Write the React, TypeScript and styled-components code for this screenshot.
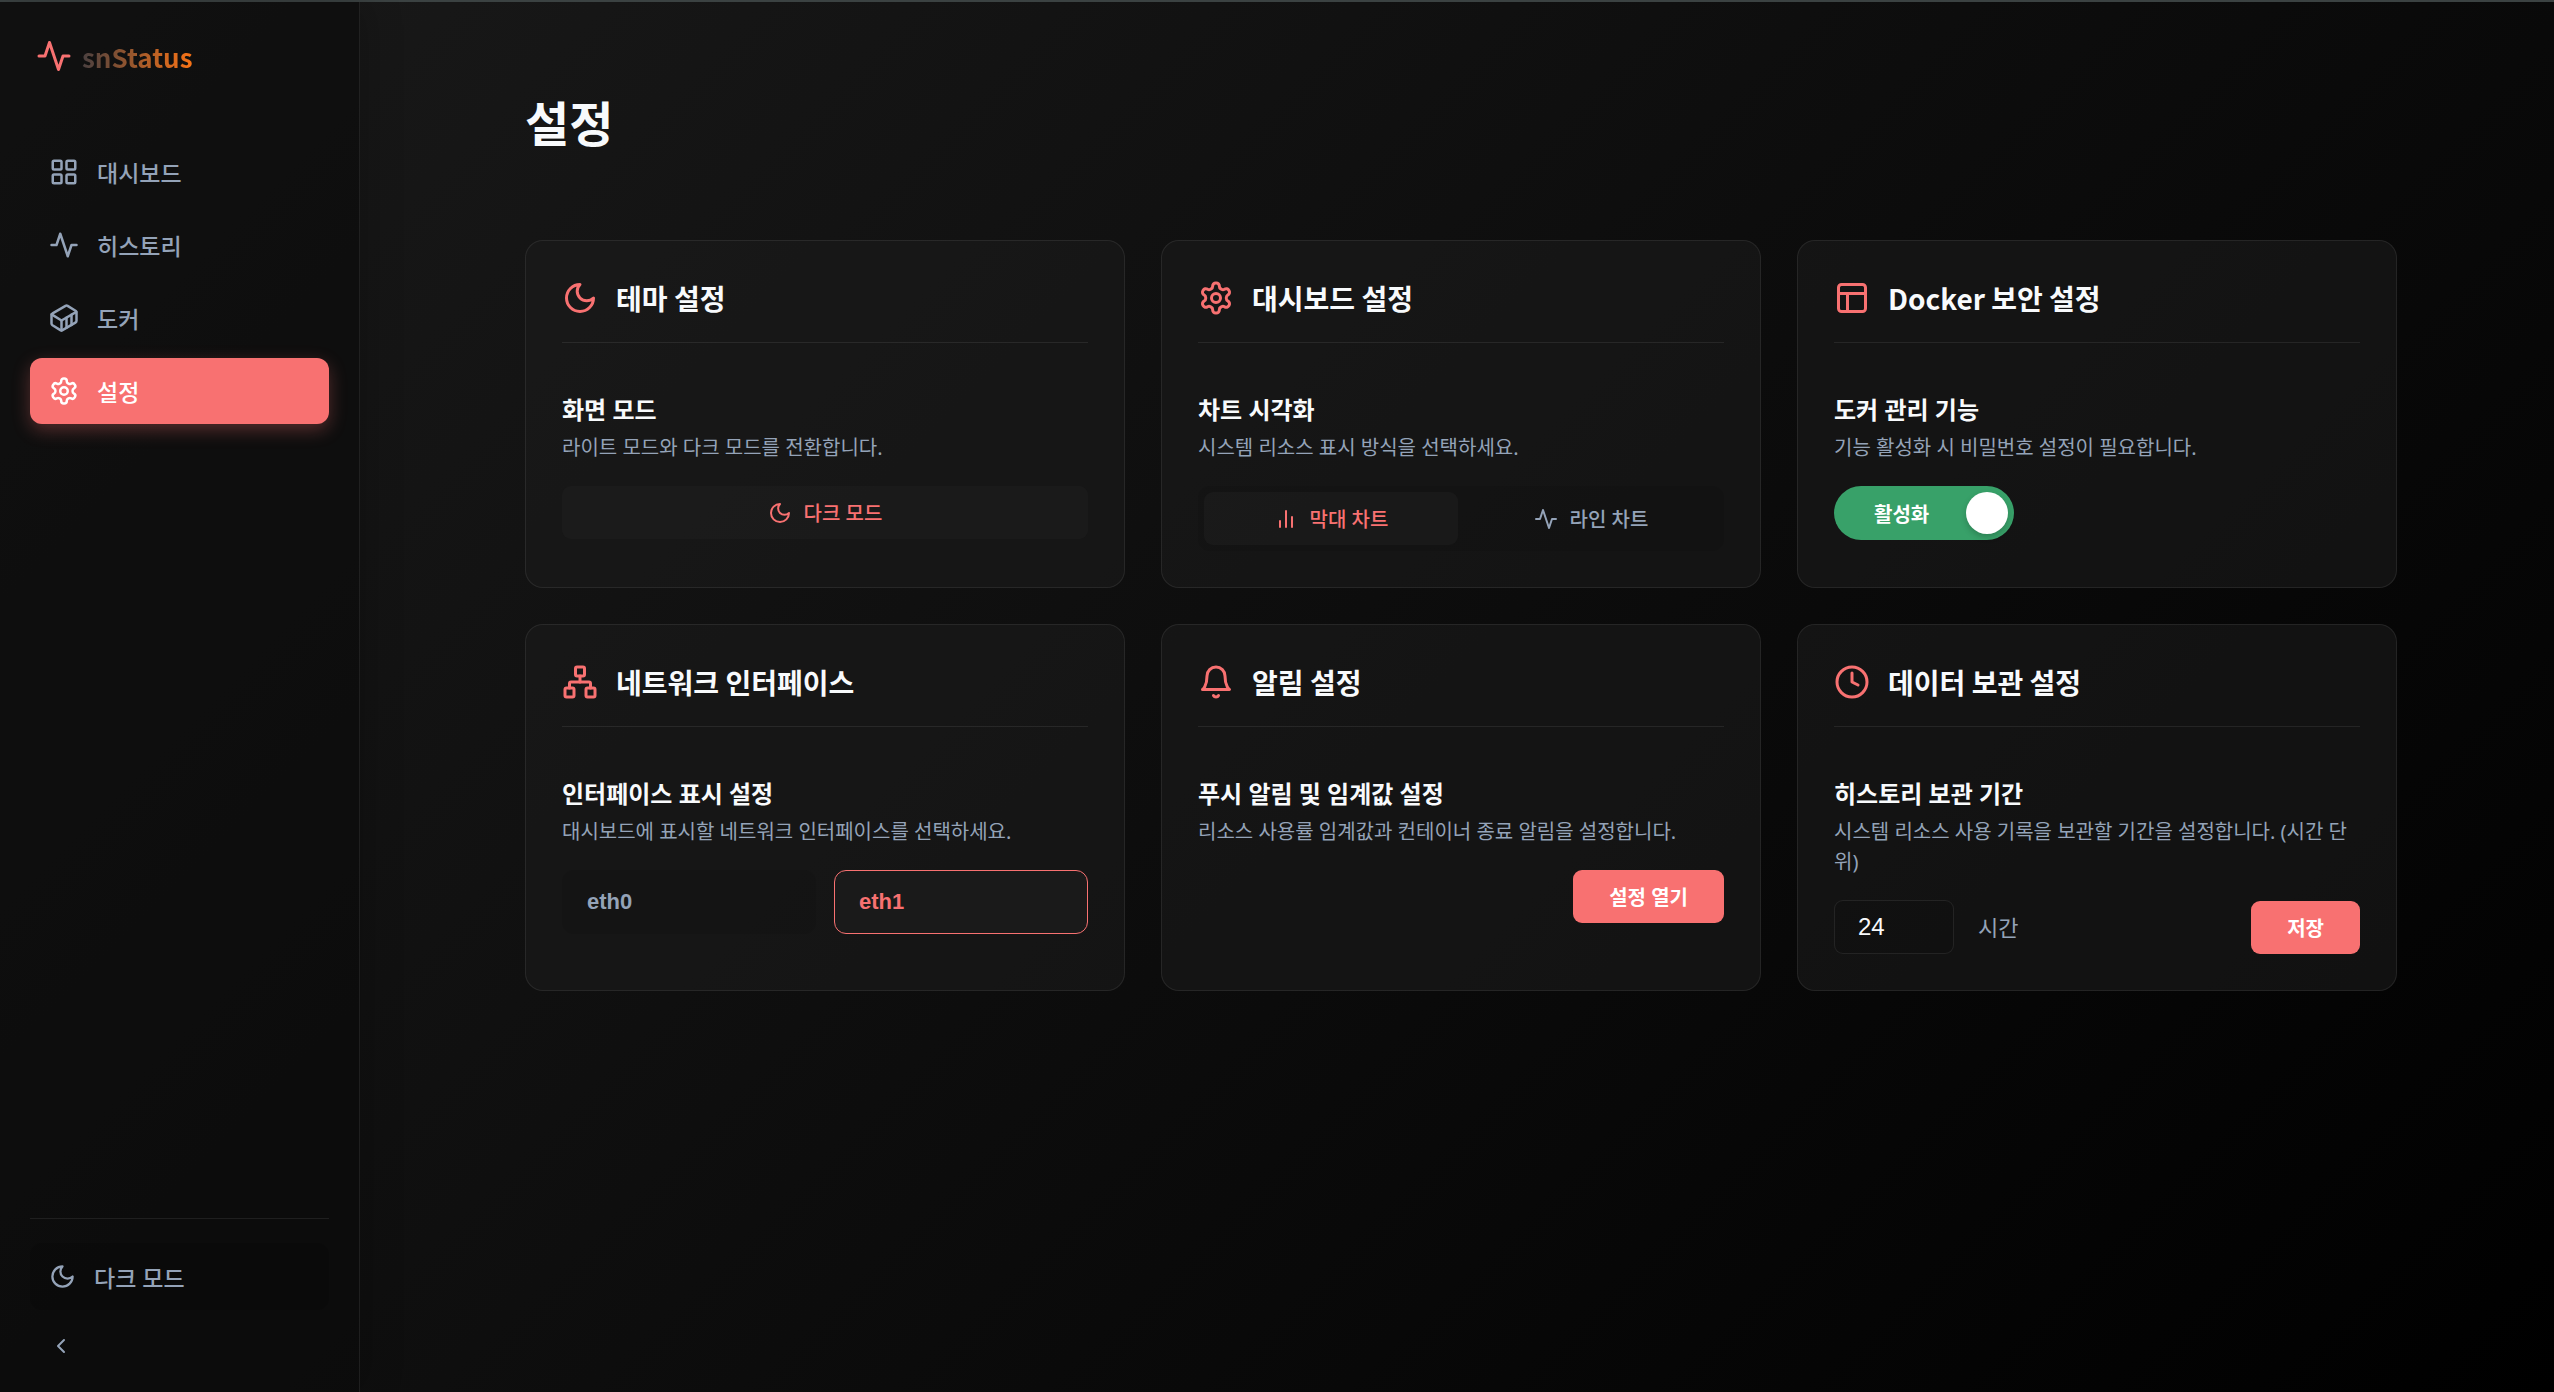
import React, { useState } from 'react';
import styled, { createGlobalStyle, css } from 'styled-components';

const accent = '#f87171';
const text = '#f8fafc';
const muted = '#94a3b8';
const line = 'rgba(255, 255, 255, 0.08)';
const inset = 'rgba(0, 0, 0, 0.08)';
const headingFont = '"Noto Sans CJK KR", "Noto Sans", sans-serif';

const GlobalStyle = createGlobalStyle`
  * { box-sizing: border-box; }
  html, body, #root { margin: 0; min-height: 100vh; }
  body {
    background: linear-gradient(135deg, #1a1a1a 0%, #000000 100%) no-repeat;
    color: ${text};
    font-family: "Noto Sans", "Noto Sans CJK KR", sans-serif;
    font-size: 24px;
    line-height: 1.5;
  }
  button { font-family: inherit; cursor: pointer; }
  h1, h2, h3, p { margin: 0; }
`;

type IconName =
  | 'grid' | 'activity' | 'container' | 'settings' | 'moon' | 'chevronLeft'
  | 'bars' | 'layout' | 'network' | 'bell' | 'clock';

const shapes: Record<IconName, React.ReactNode> = {
  grid: (
    <>
      <rect x="3" y="3" width="7" height="7" rx="1" />
      <rect x="14" y="3" width="7" height="7" rx="1" />
      <rect x="14" y="14" width="7" height="7" rx="1" />
      <rect x="3" y="14" width="7" height="7" rx="1" />
    </>
  ),
  activity: <path d="M22 12h-4l-3 9L9 3l-3 9H2" />,
  container: (
    <>
      <path d="M22 7.7c0-.6-.4-1.2-.8-1.5l-6.3-3.9a1.72 1.72 0 0 0-1.7 0l-10.3 6c-.5.2-.9.8-.9 1.4v6.6c0 .5.4 1.2.8 1.5l6.3 3.9a1.72 1.72 0 0 0 1.7 0l10.3-6c.5-.3.9-1 .9-1.5Z" />
      <path d="M10 21.9V14L2.1 9.1" />
      <path d="m10 14 11.9-6.9" />
      <path d="M14 19.8v-8.1" />
      <path d="M18 17.5V9.4" />
    </>
  ),
  settings: (
    <>
      <path d="M12.22 2h-.44a2 2 0 0 0-2 2v.18a2 2 0 0 1-1 1.73l-.43.25a2 2 0 0 1-2 0l-.15-.08a2 2 0 0 0-2.73.73l-.22.38a2 2 0 0 0 .73 2.73l.15.1a2 2 0 0 1 1 1.72v.51a2 2 0 0 1-1 1.74l-.15.09a2 2 0 0 0-.73 2.73l.22.38a2 2 0 0 0 2.73.73l.15-.08a2 2 0 0 1 2 0l.43.25a2 2 0 0 1 1 1.73V20a2 2 0 0 0 2 2h.44a2 2 0 0 0 2-2v-.18a2 2 0 0 1 1-1.73l.43-.25a2 2 0 0 1 2 0l.15.08a2 2 0 0 0 2.73-.73l.22-.39a2 2 0 0 0-.73-2.73l-.15-.08a2 2 0 0 1-1-1.74v-.5a2 2 0 0 1 1-1.74l.15-.09a2 2 0 0 0 .73-2.73l-.22-.38a2 2 0 0 0-2.73-.73l-.15.08a2 2 0 0 1-2 0l-.43-.25a2 2 0 0 1-1-1.73V4a2 2 0 0 0-2-2z" />
      <circle cx="12" cy="12" r="3" />
    </>
  ),
  moon: <path d="M12 3a6 6 0 0 0 9 9 9 9 0 1 1-9-9Z" />,
  chevronLeft: <path d="m15 18-6-6 6-6" />,
  bars: (
    <>
      <path d="M18 20V10" />
      <path d="M12 20V4" />
      <path d="M6 20v-6" />
    </>
  ),
  layout: (
    <>
      <rect x="3" y="3" width="18" height="18" rx="2" />
      <path d="M3 9h18" />
      <path d="M9 21V9" />
    </>
  ),
  network: (
    <>
      <rect x="16" y="16" width="6" height="6" rx="1" />
      <rect x="2" y="16" width="6" height="6" rx="1" />
      <rect x="9" y="2" width="6" height="6" rx="1" />
      <path d="M5 16v-3a1 1 0 0 1 1-1h12a1 1 0 0 1 1 1v3" />
      <path d="M12 12V8" />
    </>
  ),
  bell: (
    <>
      <path d="M6 8a6 6 0 0 1 12 0c0 7 3 9 3 9H3s3-2 3-9" />
      <path d="M10.3 21a1.94 1.94 0 0 0 3.4 0" />
    </>
  ),
  clock: (
    <>
      <circle cx="12" cy="12" r="10" />
      <path d="M12 6v6l4 2" />
    </>
  ),
};

const Svg = styled.svg`
  flex: none;
  display: block;
  fill: none;
  stroke: currentColor;
  stroke-width: 2;
  stroke-linecap: round;
  stroke-linejoin: round;
`;

const Icon = ({ name, size }: { name: IconName; size: number }) => (
  <Svg width={size} height={size} viewBox="0 0 24 24" aria-hidden="true">
    {shapes[name]}
  </Svg>
);

const Shell = styled.div`
  display: flex;
  min-height: 100vh;
  border-top: 2px solid #3b4242;
`;

const Sidebar = styled.aside`
  flex: none;
  width: 360px;
  display: flex;
  flex-direction: column;
  padding: 36px 30px 22px;
  background: rgba(10, 10, 10, 0.6);
  border-right: 1px solid ${line};
  box-shadow: 6px 0 36px rgba(0, 0, 0, 0.2);
`;

const Brand = styled.div`
  display: flex;
  align-items: center;
  gap: 10px;
  height: 36px;
  padding-left: 6px;
  color: ${accent};
`;

const BrandName = styled.span`
  font-family: ${headingFont};
  font-size: 26px;
  font-weight: 700;
  background: linear-gradient(90deg, #4a4040 0%, #f97316 100%);
  background-clip: text;
  -webkit-background-clip: text;
  color: transparent;
`;

const Nav = styled.nav`
  display: flex;
  flex-direction: column;
  gap: 7px;
  margin-top: 65px;
`;

const NavLink = styled.a<{ $active?: boolean }>`
  display: flex;
  align-items: center;
  gap: 18px;
  height: 66px;
  padding: 0 19px;
  border-radius: 12px;
  font-family: ${headingFont};
  font-size: 23px;
  font-weight: 500;
  text-decoration: none;
  color: ${muted};
  ${({ $active }) =>
    $active &&
    css`
      background: ${accent};
      color: #ffffff;
      box-shadow: 0 6px 18px rgba(248, 113, 113, 0.3);
    `}
`;

const SidebarFooter = styled.div`
  display: flex;
  flex-direction: column;
  gap: 12px;
  margin-top: auto;
  padding-top: 24px;
  border-top: 1px solid ${line};
`;

const ThemeButton = styled.button`
  display: flex;
  align-items: center;
  gap: 18px;
  height: 67px;
  padding: 0 19px;
  border: 0;
  border-radius: 12px;
  background: rgba(0, 0, 0, 0.15);
  color: ${muted};
  font-size: 23px;
  font-weight: 500;
`;

const CollapseButton = styled.button`
  align-self: flex-start;
  padding: 12px 19px;
  border: 0;
  background: none;
  color: ${muted};
`;

const Main = styled.main`
  flex: 1;
  min-width: 0;
  padding: 86px 48px 48px 56px;
`;

const Content = styled.div`
  max-width: 1872px;
  margin: 0 auto;
`;

const PageTitle = styled.h1`
  margin-bottom: 80px;
  font-size: 48px;
  line-height: 72px;
  font-weight: 700;
`;

const Cards = styled.div`
  display: grid;
  grid-template-columns: repeat(auto-fit, minmax(480px, 1fr));
  gap: 36px;
`;

const Panel = styled.section`
  padding: 36px;
  border: 1px solid ${line};
  border-radius: 18px;
  background: rgba(26, 26, 26, 0.6);
`;

const PanelHeader = styled.header`
  display: flex;
  align-items: center;
  gap: 18px;
  margin-bottom: 49px;
  padding-bottom: 23px;
  border-bottom: 1px solid ${line};
  color: ${accent};
`;

const PanelTitle = styled.h2`
  color: ${text};
  font-family: ${headingFont};
  font-size: 28px;
  line-height: 42px;
  font-weight: 700;
`;

const SettingName = styled.h3`
  margin-bottom: 5px;
  font-size: 24px;
  line-height: 36px;
  font-weight: 700;
`;

const SettingHint = styled.p`
  margin-bottom: 23px;
  color: ${muted};
  font-size: 20px;
  line-height: 30px;
`;

const ChoiceRow = styled.div`
  display: grid;
  grid-template-columns: 1fr 1fr;
  gap: 6px;
  padding: 6px;
  border-radius: 12px;
  background: ${inset};
`;

const Choice = styled.button<{ $on: boolean }>`
  display: flex;
  align-items: center;
  justify-content: center;
  gap: 12px;
  width: 100%;
  height: 53px;
  border: 0;
  border-radius: 9px;
  background: ${({ $on }) => ($on ? 'rgba(30, 30, 30, 0.6)' : 'transparent')};
  color: ${({ $on }) => ($on ? accent : muted)};
  font-size: 20px;
  font-weight: 500;
`;

const Switch = styled.button<{ $on: boolean }>`
  display: flex;
  align-items: center;
  justify-content: space-between;
  flex-direction: ${({ $on }) => ($on ? 'row' : 'row-reverse')};
  width: 180px;
  height: 54px;
  padding: 0 6px 0 40px;
  border: 0;
  border-radius: 27px;
  background: ${({ $on }) => ($on ? '#38a169' : '#4a5568')};
  color: #ffffff;
  font-size: 20px;
  font-weight: 700;
`;

const Knob = styled.span`
  width: 42px;
  height: 42px;
  border-radius: 50%;
  background: #ffffff;
  box-shadow: 0 3px 6px rgba(0, 0, 0, 0.2);
`;

const InterfaceGrid = styled.div`
  display: grid;
  grid-template-columns: 1fr 1fr;
  gap: 18px;
`;

const InterfaceButton = styled.button<{ $on: boolean }>`
  height: 64px;
  padding: 0 24px;
  border: 1px solid ${({ $on }) => ($on ? accent : 'transparent')};
  border-radius: 12px;
  background: ${({ $on }) => ($on ? 'rgba(30, 30, 30, 0.6)' : inset)};
  color: ${({ $on }) => ($on ? accent : muted)};
  font-family: "Liberation Sans", sans-serif;
  font-size: 22px;
  font-weight: 700;
  text-align: left;
`;

const Actions = styled.div`
  display: flex;
  justify-content: flex-end;
`;

const PrimaryButton = styled.button`
  height: 53px;
  padding: 0 36px;
  border: 0;
  border-radius: 9px;
  background: ${accent};
  color: #ffffff;
  font-size: 20px;
  font-weight: 700;
`;

const RetentionRow = styled.form`
  display: flex;
  align-items: center;
  justify-content: space-between;
`;

const HoursField = styled.label`
  display: flex;
  align-items: center;
  gap: 24px;
  color: ${muted};
  font-size: 22px;
`;

const HoursInput = styled.input`
  width: 120px;
  height: 54px;
  padding: 0 23px;
  border: 1px solid ${line};
  border-radius: 9px;
  background: ${inset};
  color: ${text};
  font-family: "Liberation Sans", sans-serif;
  font-size: 24px;
`;

const navItems: { icon: IconName; label: string }[] = [
  { icon: 'grid', label: '대시보드' },
  { icon: 'activity', label: '히스토리' },
  { icon: 'container', label: '도커' },
  { icon: 'settings', label: '설정' },
];

type CardProps = {
  icon: IconName;
  title: string;
  name: string;
  hint: string;
  children: React.ReactNode;
};

const Card = ({ icon, title, name, hint, children }: CardProps) => (
  <Panel>
    <PanelHeader>
      <Icon name={icon} size={36} />
      <PanelTitle>{title}</PanelTitle>
    </PanelHeader>
    <SettingName>{name}</SettingName>
    <SettingHint>{hint}</SettingHint>
    {children}
  </Panel>
);

export default function App() {
  const [chart, setChart] = useState('bar');
  const [docker, setDocker] = useState(true);
  const [selected, setSelected] = useState('eth1');
  const [hours, setHours] = useState('24');

  return (
    <>
      <GlobalStyle />
      <Shell>
        <Sidebar>
          <Brand>
            <Icon name="activity" size={36} />
            <BrandName>snStatus</BrandName>
          </Brand>
          <Nav>
            {navItems.map(({ icon, label }) => (
              <NavLink key={label} href="#" $active={label === '설정'}>
                <Icon name={icon} size={30} />
                {label}
              </NavLink>
            ))}
          </Nav>
          <SidebarFooter>
            <ThemeButton type="button">
              <Icon name="moon" size={27} />
              다크 모드
            </ThemeButton>
            <CollapseButton type="button" aria-label="사이드바 접기">
              <Icon name="chevronLeft" size={24} />
            </CollapseButton>
          </SidebarFooter>
        </Sidebar>
        <Main>
          <Content>
            <PageTitle>설정</PageTitle>
            <Cards>
              <Card icon="moon" title="테마 설정" name="화면 모드" hint="라이트 모드와 다크 모드를 전환합니다.">
                <Choice type="button" $on>
                  <Icon name="moon" size={24} />
                  다크 모드
                </Choice>
              </Card>
              <Card icon="settings" title="대시보드 설정" name="차트 시각화" hint="시스템 리소스 표시 방식을 선택하세요.">
                <ChoiceRow>
                  <Choice type="button" $on={chart === 'bar'} onClick={() => setChart('bar')}>
                    <Icon name="bars" size={24} />
                    막대 차트
                  </Choice>
                  <Choice type="button" $on={chart === 'line'} onClick={() => setChart('line')}>
                    <Icon name="activity" size={24} />
                    라인 차트
                  </Choice>
                </ChoiceRow>
              </Card>
              <Card icon="layout" title="Docker 보안 설정" name="도커 관리 기능" hint="기능 활성화 시 비밀번호 설정이 필요합니다.">
                <Switch type="button" role="switch" aria-checked={docker} $on={docker} onClick={() => setDocker(!docker)}>
                  {docker ? '활성화' : '비활성화'}
                  <Knob />
                </Switch>
              </Card>
              <Card icon="network" title="네트워크 인터페이스" name="인터페이스 표시 설정" hint="대시보드에 표시할 네트워크 인터페이스를 선택하세요.">
                <InterfaceGrid>
                  {['eth0', 'eth1'].map((id) => (
                    <InterfaceButton key={id} type="button" $on={selected === id} onClick={() => setSelected(id)}>
                      {id}
                    </InterfaceButton>
                  ))}
                </InterfaceGrid>
              </Card>
              <Card icon="bell" title="알림 설정" name="푸시 알림 및 임계값 설정" hint="리소스 사용률 임계값과 컨테이너 종료 알림을 설정합니다.">
                <Actions>
                  <PrimaryButton type="button">설정 열기</PrimaryButton>
                </Actions>
              </Card>
              <Card icon="clock" title="데이터 보관 설정" name="히스토리 보관 기간" hint="시스템 리소스 사용 기록을 보관할 기간을 설정합니다. (시간 단위)">
                <RetentionRow onSubmit={(e) => e.preventDefault()}>
                  <HoursField>
                    <HoursInput type="text" inputMode="numeric" value={hours} onChange={(e) => setHours(e.target.value)} />
                    시간
                  </HoursField>
                  <PrimaryButton type="submit">저장</PrimaryButton>
                </RetentionRow>
              </Card>
            </Cards>
          </Content>
        </Main>
      </Shell>
    </>
  );
}
